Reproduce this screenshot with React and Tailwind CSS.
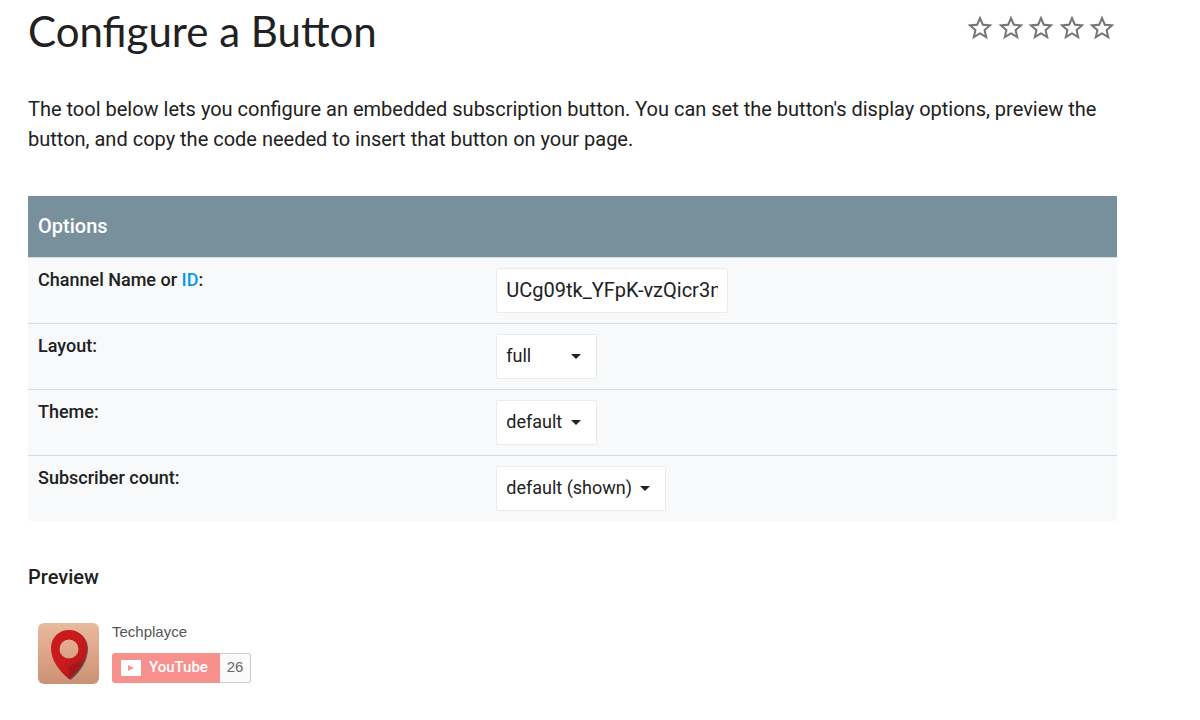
import React, { useState } from 'react'
import { MdStarBorder } from 'react-icons/md'

const stars = [1, 2, 3, 4, 5]

function Dropdown({ id, value, onChange, options, width }) {
  return (
    <div className={`relative ${width}`}>
      <select
        id={id}
        value={value}
        onChange={e => onChange(e.target.value)}
        className="block h-[45px] w-full appearance-none rounded-xs border border-[#ebebeb] bg-white pl-[9px] text-lg text-[#212121]"
      >
        {options.map((option) => (
          <option key={option} value={option}>{option}</option>
        ))}
      </select>
      <svg viewBox="0 0 10 5" className="pointer-events-none absolute right-4 top-5 h-[5px] w-[10px] fill-[#212121]">
        <path d="M0 0h10L5 5z" />
      </svg>
    </div>
  )
}

function OptionRow({ label, htmlFor, children }) {
  return (
    <tr className="border-t border-[#d5dadd] bg-[#f7f9fa]">
      <th scope="row" className="px-[10px] py-[10px] text-left align-top text-lg leading-6 font-medium">
        <label htmlFor={htmlFor}>{label}</label>
      </th>
      <td className="py-[10px] align-top">{children}</td>
    </tr>
  )
}

function Avatar() {
  return (
    <svg viewBox="0 0 61 61" className="size-[61px] rounded-md" role="img" aria-label="Channel">
      <defs>
        <linearGradient id="skin" x1="0" y1="0" x2="0" y2="1">
          <stop offset="0" stopColor="#e8bba0" />
          <stop offset="0.5" stopColor="#dda587" />
          <stop offset="1" stopColor="#cc9175" />
        </linearGradient>
        <linearGradient id="pin" x1="0" y1="0" x2="1" y2="1">
          <stop offset="0.5" stopColor="#cb1a1e" />
          <stop offset="1" stopColor="#a5171b" />
        </linearGradient>
      </defs>
      <rect width="61" height="61" fill="url(#skin)" />
      <path fill="#5c5453" fillRule="evenodd" d="M32.500 8C23 8 15 15.500 15 25.500 15 37 22 49 32.500 57 43 49 50 37 50 25.500 50 15.500 42 8 32.500 8zM31 16a10 10 0 1 1 0 20 10 10 0 0 1 0-20z" />
      <path fill="url(#pin)" fillRule="evenodd" d="M31 7C21 7 13 14.500 13 25c0 12 7.500 22.500 18 31 10.500-8.500 18-19 18-31C49 14.500 41 7 31 7zm0 9.500a9.500 9.500 0 1 1 0 19 9.500 9.500 0 0 1 0-19z" />
      <path fill="#a5171b" d="M31 56V43l9-4 4 2C41 47 36 52 31 56z" />
    </svg>
  )
}

export default function App() {
  const [channel, setChannel] = useState('UCg09tk_YFpK-vzQicr3nA')
  const [layout, setLayout] = useState('full')
  const [theme, setTheme] = useState('default')
  const [count, setCount] = useState('default (shown)')

  return (
    <main className="bg-white pt-2 pr-[83px] pl-7 font-['Roboto',sans-serif] text-[#212121]">
      <div className="flex items-start justify-between">
        <h1 className="font-['Lato',sans-serif] text-[42px] leading-[46px]">Configure a Button</h1>
        <div className="mt-[5px] flex w-[152px] justify-between">
          {stars.map((star) => (
            <button key={star} type="button" aria-label={`Rate ${star}`}>
              <MdStarBorder className="size-[30px] text-[#757575]" />
            </button>
          ))}
        </div>
      </div>

      <p className="mt-10 text-xl leading-[30px]">
        The tool below lets you configure an embedded subscription button. You can set the button's display options, preview the button, and copy the code needed to insert that button on your page.
      </p>

      <table className="mt-[42px] w-full table-fixed border-collapse">
        <colgroup>
          <col className="w-[43%]" />
          <col />
        </colgroup>
        <thead>
          <tr className="bg-[#78909c]">
            <th colSpan={2} className="h-[61px] px-[10px] text-left text-xl font-medium text-white">Options</th>
          </tr>
        </thead>
        <tbody>
          <OptionRow htmlFor="channel" label={<>Channel Name or <a href="#id" className="text-[#039be5]">ID</a>:</>}>
            <input
              id="channel"
              type="text"
              value={channel}
              onChange={e => setChannel(e.target.value)}
              className="block h-[45px] w-[232px] rounded-xs border border-[#ebebeb] bg-white px-[9px] text-xl"
            />
          </OptionRow>
          <OptionRow htmlFor="layout" label="Layout:">
            <Dropdown id="layout" value={layout} onChange={setLayout} options={['full', 'default']} width="w-[101px]" />
          </OptionRow>
          <OptionRow htmlFor="theme" label="Theme:">
            <Dropdown id="theme" value={theme} onChange={setTheme} options={['default', 'dark']} width="w-[101px]" />
          </OptionRow>
          <OptionRow htmlFor="count" label="Subscriber count:">
            <Dropdown id="count" value={count} onChange={setCount} options={['default (shown)', 'hidden']} width="w-[170px]" />
          </OptionRow>
        </tbody>
      </table>

      <h2 className="mt-[41px] text-xl leading-[30px] font-medium">Preview</h2>

      <div className="mt-[31px] flex gap-[13px] px-[10px] font-['Liberation_Sans',sans-serif]">
        <Avatar />
        <div>
          <p className="text-[15px] leading-[18px] text-[#555555]">Techplayce</p>
          <div className="mt-3 flex h-[30px]">
            <button type="button" className="flex w-[108px] items-center gap-2 rounded-l-[3px] bg-[#f6918e] pl-[9px] font-['Roboto',sans-serif] text-[15px] font-medium text-white">
              <svg viewBox="0 0 20 16" className="h-4 w-5">
                <rect width="20" height="16" rx="1" fill="#fff" />
                <path d="M7 5l6 3-6 3z" fill="#f6918e" />
              </svg>
              YouTube
            </button>
            <span className="flex w-[31px] items-center justify-center rounded-r-[3px] border border-l-0 border-[#cccccc] bg-[#fafafa] text-[15px] text-[#666666]">26</span>
          </div>
        </div>
      </div>
    </main>
  )
}
